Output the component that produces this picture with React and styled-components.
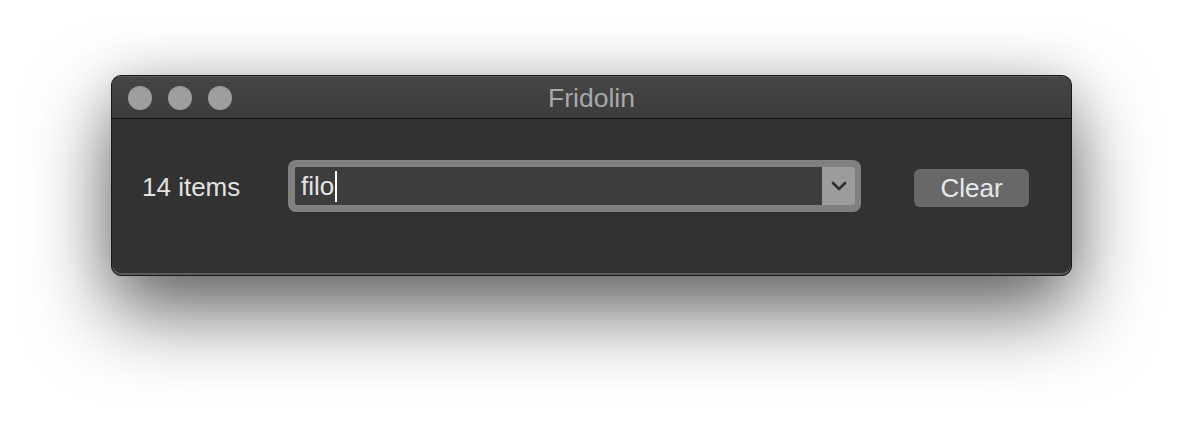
import styled, { createGlobalStyle } from "styled-components";

const Global = createGlobalStyle`
  html, body {
    margin: 0;
    background: #ffffff;
    font-family: "Liberation Sans", Arial, sans-serif;
  }
`;

const Stage = styled.div`
  width: 1184px;
  height: 424px;
  padding: 75px 0 0 111px;
  box-sizing: border-box;
  overflow: hidden;
`;

const Window = styled.div`
  width: 961px;
  height: 201px;
  box-sizing: border-box;
  border: 1px solid #1a1a1a;
  border-radius: 10px;
  background: #323232;
  display: flex;
  flex-direction: column;
  overflow: hidden;
  box-shadow: 0 36px 80px rgba(0, 0, 0, 0.6), 0 0 50px rgba(0, 0, 0, 0.12),
    inset 0 -2px 0 #5a5a5a;
`;

const TitleBar = styled.div`
  position: relative;
  height: 42px;
  flex: none;
  display: flex;
  align-items: center;
  justify-content: center;
  background: linear-gradient(#464646, #3c3c3c);
  border-bottom: 1px solid #141414;
  box-shadow: inset 0 1px 0 #5c5c5c;
`;

const Lights = styled.div`
  position: absolute;
  left: 16px;
  top: 10px;
  display: flex;
  gap: 16px;
`;

const Light = styled.span`
  width: 24px;
  height: 24px;
  border-radius: 50%;
  background: #9e9e9e;
`;

const Title = styled.div`
  font-size: 26.5px;
  color: #a8a8a8;
  margin-top: 3px;
`;

const Content = styled.div`
  display: flex;
  align-items: center;
  padding: 41px 0 0 30px;
`;

const Label = styled.div`
  width: 146px;
  font-size: 26px;
  color: #e2e2e2;
  flex: none;
  margin-top: 2px;
`;

const Combo = styled.div`
  width: 573px;
  height: 52px;
  box-sizing: border-box;
  border-radius: 8px;
  background: #808080;
  padding: 7px 6px 7px 7px;
  display: flex;
  flex: none;
`;

const Field = styled.div`
  flex: 1;
  background: #3d3d3d;
  display: flex;
  align-items: center;
  padding-left: 6px;
  font-size: 26px;
  color: #e4e4e4;
  border-radius: 2px 0 0 2px;
`;

const Caret = styled.span`
  width: 2px;
  height: 31px;
  background: #ffffff;
  margin-left: 1px;
`;

const Arrow = styled.div`
  width: 33px;
  background: #9c9c9c;
  display: flex;
  align-items: center;
  justify-content: center;
  border-radius: 0 3px 3px 0;
`;

const ClearButton = styled.button`
  margin-left: 53px;
  width: 115px;
  height: 38px;
  border: none;
  border-radius: 6px;
  background: #686868;
  color: #e8e8e8;
  font-family: "Liberation Sans", Arial, sans-serif;
  font-size: 26px;
  padding: 0;
  margin-top: 4px;
`;

export default function App() {
  return (
    <>
      <Global />
      <Stage>
        <Window>
          <TitleBar>
            <Lights>
              <Light />
              <Light />
              <Light />
            </Lights>
            <Title>Fridolin</Title>
          </TitleBar>
          <Content>
            <Label>14 items</Label>
            <Combo>
              <Field>
                filo
                <Caret />
              </Field>
              <Arrow>
                <svg width="16" height="10" viewBox="0 0 16 10">
                  <path
                    d="M2 2l6 6 6-6"
                    fill="none"
                    stroke="#2e2e2e"
                    strokeWidth="2.6"
                    strokeLinecap="round"
                    strokeLinejoin="round"
                  />
                </svg>
              </Arrow>
            </Combo>
            <ClearButton>Clear</ClearButton>
          </Content>
        </Window>
      </Stage>
    </>
  );
}
